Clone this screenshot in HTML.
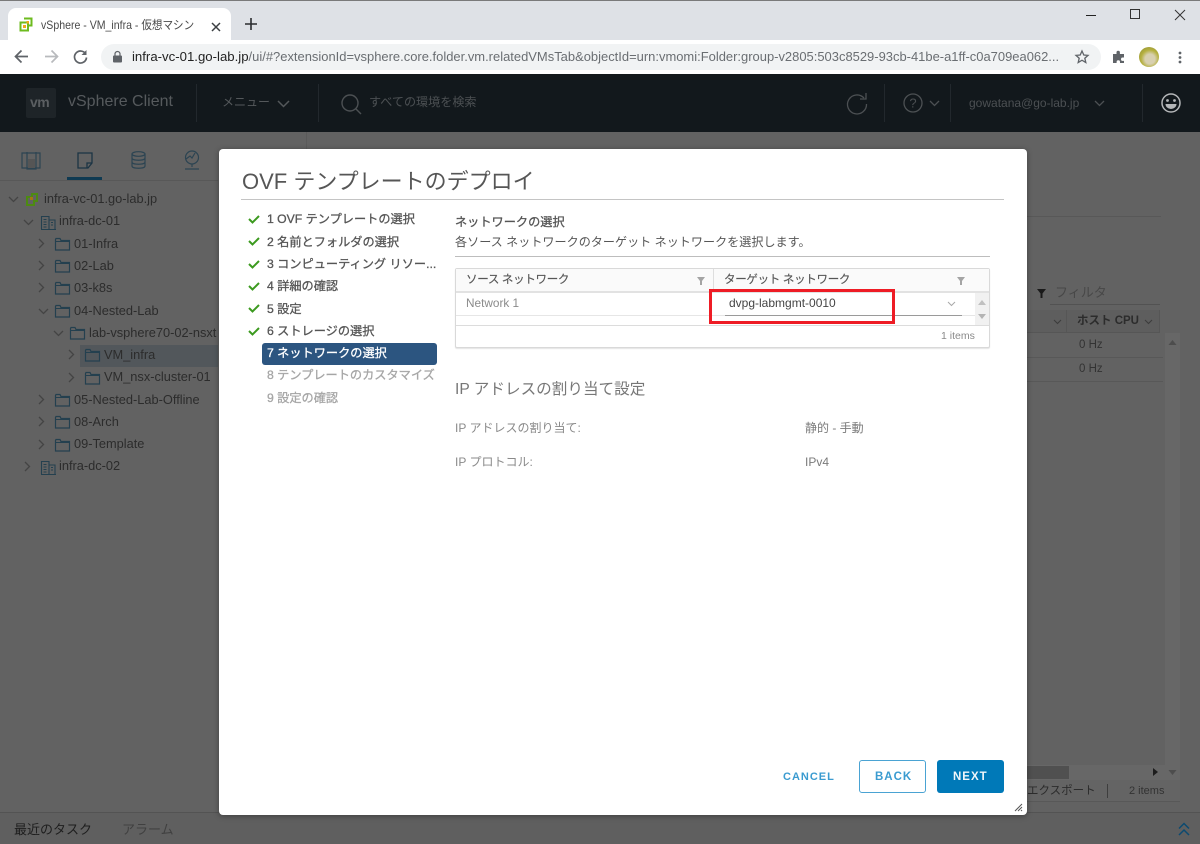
<!DOCTYPE html>
<html lang="ja"><head><meta charset="utf-8"><title>vSphere</title>
<style>
:root{color-scheme:light}
html,body{margin:0;padding:0;width:1200px;height:844px;overflow:hidden;background:#626262}
body{position:relative;font-family:"Liberation Sans","Noto Sans CJK JP",sans-serif}
.t{position:absolute;white-space:nowrap;line-height:20px;height:20px}
.b{position:absolute}
svg{position:absolute;overflow:visible}
.tree{font-size:12.8px;color:#2c2c2c}
.st{font-size:12.2px;color:#565656;left:267px;-webkit-text-stroke:.3px currentColor}
.g{color:#a6a6a6}
.btn{font-size:11.5px;font-weight:700;letter-spacing:1px;color:#3a9bd0}
.hd{font-size:11.5px;letter-spacing:-.3px;color:#565656;-webkit-text-stroke:.15px currentColor}
</style></head><body>
<div class="b" style="left:0;top:0;width:1200px;height:844px;background:#626262"></div>

<!-- chrome -->
<div class="b" style="left:0;top:0;width:1200px;height:40px;background:#dee1e6;border-top:1px solid #7a7a7a;box-sizing:border-box"></div>
<div class="b" style="left:8px;top:8px;width:223px;height:32px;background:#fff;border-radius:8px 8px 0 0"></div>
<svg style="left:19px;top:17px" width="14" height="15" viewBox="0 0 14 15"><path d="M5 1.500h7.500v7H10M1.500 5.500H9v8H1.500z" fill="none" stroke="#6dbb1f" stroke-width="2"/><rect x="4" y="8" width="3" height="3" fill="#f0a81c"/><rect x="7.500" y="4" width="2.500" height="2.500" fill="#f0a81c"/></svg>
<div class="t" style="left:41px;top:15px;font-size:12px;color:#4a4a4a;transform:scaleX(.88);transform-origin:0 50%">vSphere - VM_infra - 仮想マシン</div>
<svg style="left:211px;top:22px" width="10" height="10" viewBox="0 0 10 10"><path d="M1 1l8 8M9 1l-8 8" stroke="#3c4043" stroke-width="1.500"/></svg>
<svg style="left:245px;top:18px" width="12" height="12" viewBox="0 0 12 12"><path d="M6 0v12M0 6h12" stroke="#2a2c2f" stroke-width="1.600"/></svg>
<div class="b" style="left:1086px;top:15px;width:10px;height:1px;background:#222"></div>
<div class="b" style="left:1130px;top:9px;width:8px;height:8px;border:1.500px solid #333"></div>
<svg style="left:1175px;top:10px" width="10" height="10" viewBox="0 0 10 10"><path d="M0 0l10 10M10 0L0 10" stroke="#333" stroke-width="1"/></svg>

<div class="b" style="left:0;top:40px;width:1200px;height:34px;background:#fff"></div>
<svg style="left:14px;top:49px" width="15" height="15" viewBox="0 0 15 15"><path d="M14 7.500H2M7.500 1.500l-6 6 6 6" fill="none" stroke="#5f6368" stroke-width="1.700"/></svg>
<svg style="left:44px;top:49px" width="15" height="15" viewBox="0 0 15 15"><path d="M1 7.500h12M7.500 1.500l6 6-6 6" fill="none" stroke="#b8babd" stroke-width="1.700"/></svg>
<svg style="left:73px;top:49px" width="15" height="15" viewBox="0 0 15 15"><path d="M12.700 5A6 6 0 1 0 13.500 8.500" fill="none" stroke="#5f6368" stroke-width="1.700"/><path d="M13.500 1v5h-5z" fill="#5f6368"/></svg>
<div class="b" style="left:101px;top:44px;width:1000px;height:26px;background:#f1f3f4;border-radius:13px"></div>
<svg style="left:113px;top:51px" width="9" height="12" viewBox="0 0 9 12"><rect x="0" y="4.500" width="9" height="7" rx="1" fill="#5f6368"/><path d="M2 5V3a2.500 2.500 0 0 1 5 0v2" fill="none" stroke="#5f6368" stroke-width="1.200"/></svg>
<div class="t" style="left:132px;top:47px;font-size:12.96px;color:#6a6e72"><span style="color:#222;font-size:13.2px">infra-vc-01.go-lab.jp</span>/ui/#?extensionId=vsphere.core.folder.vm.relatedVMsTab&amp;objectId=urn:vmomi:Folder:group-v2805:503c8529-93cb-41be-a1ff-c0a709ea062...</div>
<svg style="left:1075px;top:50px" width="14" height="14" viewBox="0 0 14 14"><path d="M7 1l1.800 4 4.200.4-3.200 2.800 1 4.300L7 10.200 3.200 12.500l1-4.300L1 5.400 5.200 5z" fill="none" stroke="#5f6368" stroke-width="1.300"/></svg>
<svg style="left:1112px;top:50px" width="14" height="14" viewBox="0 0 14 14"><path d="M1 4h3.500V2.500a1.700 1.700 0 0 1 3.400 0V4H12v3.500h-1.300a1.700 1.700 0 0 0 0 3.400H12V13H8v-1a1.700 1.700 0 0 0-3.400 0v1H1z" fill="#5f6368"/></svg>
<div class="b" style="left:1139px;top:47px;width:20px;height:20px;border-radius:50%;background:radial-gradient(circle at 55% 60%,#d8d0b0 0 30%,#b5b040 55%,#8a8a30 100%)"></div>
<svg style="left:1178px;top:51px" width="4" height="13" viewBox="0 0 4 13"><circle cx="2" cy="2" r="1.400" fill="#5f6368"/><circle cx="2" cy="6.500" r="1.400" fill="#5f6368"/><circle cx="2" cy="11" r="1.400" fill="#5f6368"/></svg>

<!-- vsphere header -->
<div class="b" style="left:0;top:74px;width:1200px;height:58px;background:#12181c"></div>
<div class="b" style="left:26px;top:88px;width:30px;height:30px;background:#1e2428;border-radius:2px"></div>
<div class="t" style="left:30px;top:92px;font-size:14px;font-weight:700;color:#5b5f62;letter-spacing:-.5px">vm</div>
<div class="t" style="left:68px;top:92px;font-size:16px;color:#565a5d">vSphere Client</div>
<div class="b" style="left:196px;top:84px;width:1px;height:38px;background:#22282d"></div>
<div class="b" style="left:318px;top:84px;width:1px;height:38px;background:#22282d"></div>
<div class="t" style="left:222px;top:92px;font-size:12px;color:#54585b">メニュー</div>
<svg style="left:277px;top:100px" width="13" height="8" viewBox="0 0 13 8"><path d="M1 1l5.500 5.500L12 1" fill="none" stroke="#54585b" stroke-width="1.500"/></svg>
<svg style="left:341px;top:94px" width="22" height="22" viewBox="0 0 22 22"><circle cx="9" cy="9" r="8" fill="none" stroke="#4c5053" stroke-width="1.400"/><path d="M15 15l5 5" stroke="#4c5053" stroke-width="1.400"/></svg>
<div class="t" style="left:369px;top:92px;font-size:12.100px;color:#4c5053">すべての環境を検索</div>
<svg style="left:846px;top:92px" width="22" height="22" viewBox="0 0 22 22"><path d="M18 6A9.500 9.500 0 1 0 20.500 12" fill="none" stroke="#4c5053" stroke-width="1.300"/><path d="M20 1v6h-6" fill="none" stroke="#4c5053" stroke-width="1.300"/></svg>
<div class="b" style="left:884px;top:84px;width:1px;height:38px;background:#22282d"></div>
<svg style="left:903px;top:93px" width="20" height="20" viewBox="0 0 20 20"><circle cx="10" cy="10" r="9" fill="none" stroke="#4c5053" stroke-width="1.300"/><text x="10" y="14.500" text-anchor="middle" font-size="13" fill="#4c5053" font-family="Liberation Sans">?</text></svg>
<svg style="left:929px;top:100px" width="11" height="7" viewBox="0 0 11 7"><path d="M1 1l4.500 4.500L10 1" fill="none" stroke="#4c5053" stroke-width="1.300"/></svg>
<div class="b" style="left:950px;top:84px;width:1px;height:38px;background:#22282d"></div>
<div class="t" style="left:969px;top:93px;font-size:12px;color:#4c5053">gowatana@go-lab.jp</div>
<svg style="left:1094px;top:100px" width="11" height="7" viewBox="0 0 11 7"><path d="M1 1l4.500 4.500L10 1" fill="none" stroke="#4c5053" stroke-width="1.300"/></svg>
<div class="b" style="left:1142px;top:84px;width:1px;height:38px;background:#22282d"></div>
<svg style="left:1161px;top:93px" width="20" height="20" viewBox="0 0 20 20"><circle cx="10" cy="10" r="9" fill="none" stroke="#b4b6b8" stroke-width="1.500"/><circle cx="6.500" cy="7.500" r="1.400" fill="#b4b6b8"/><circle cx="13.500" cy="7.500" r="1.400" fill="#b4b6b8"/><path d="M4.500 11h11a5.500 5 0 0 1-11 0z" fill="#b4b6b8"/></svg>

<!-- sidebar tabs -->
<div class="b" style="left:306px;top:132px;width:1px;height:680px;background:#5a5a5a"></div>
<div class="b" style="left:0;top:180px;width:218px;height:1px;background:#585858"></div>
<div class="b" style="left:67px;top:177px;width:35px;height:3px;background:#0f3a52"></div>
<svg style="left:21px;top:151px" width="20" height="20" viewBox="0 0 20 20"><path d="M1 2h18v15H1zM6 1v17h9V1" fill="none" stroke="#2c4452" stroke-width="1.200"/><rect x="7" y="8" width="7" height="9" fill="#555"/></svg>
<svg style="left:77px;top:152px" width="16" height="17" viewBox="0 0 16 17"><path d="M1 1h14v10l-4 5H1zM15 11h-5v5" fill="none" stroke="#1b3444" stroke-width="1.300"/></svg>
<svg style="left:131px;top:151px" width="15" height="18" viewBox="0 0 15 18"><ellipse cx="7.500" cy="3" rx="6.500" ry="2.300" fill="none" stroke="#2c4452" stroke-width="1.200"/><path d="M1 3v12c0 3 13 3 13 0V3M1 7c0 3 13 3 13 0M1 11c0 3 13 3 13 0" fill="none" stroke="#2c4452" stroke-width="1.200"/></svg>
<svg style="left:184px;top:150px" width="16" height="20" viewBox="0 0 16 20"><circle cx="8" cy="7.500" r="6.500" fill="none" stroke="#2c4452" stroke-width="1.200"/><path d="M2 9l4-3 2 2 3-5M8 14v3M1 19h14" fill="none" stroke="#2c4452" stroke-width="1.200"/></svg>

<!-- tree -->
<div class="b" style="left:80px;top:345px;width:138px;height:22px;background:#52575b"></div>
<div class="t tree" style="left:44px;top:189px">infra-vc-01.go-lab.jp</div>
<div class="t tree" style="left:59px;top:211px">infra-dc-01</div>
<div class="t tree" style="left:74px;top:234px">01-Infra</div>
<div class="t tree" style="left:74px;top:256px">02-Lab</div>
<div class="t tree" style="left:74px;top:278px">03-k8s</div>
<div class="t tree" style="left:74px;top:301px">04-Nested-Lab</div>
<div class="t tree" style="left:89px;top:323px;width:129px;overflow:hidden">lab-vsphere70-02-nsxt</div>
<div class="t tree" style="left:104px;top:345px">VM_infra</div>
<div class="t tree" style="left:104px;top:367px">VM_nsx-cluster-01</div>
<div class="t tree" style="left:74px;top:390px">05-Nested-Lab-Offline</div>
<div class="t tree" style="left:74px;top:412px">08-Arch</div>
<div class="t tree" style="left:74px;top:434px">09-Template</div>
<div class="t tree" style="left:59px;top:456px">infra-dc-02</div>
<svg style="left:0;top:0" width="218" height="480" viewBox="0 0 218 480">
<defs><g id="f"><path d="M.5 2.500V13h14V3.500H6L5 1.500H1z" fill="none" stroke="#24404f" stroke-width="1.200"/><path d="M.5 4.500h14" stroke="#24404f"/></g>
<g id="d"><path d="M.5 14V1.500h7.500V14M8 5h6v9M0 14.500h15M2.500 4.500h3M2.500 7h3M2.500 9.500h3M2.500 12h3M10 7.500h2M10 10h2" fill="none" stroke="#24404f" stroke-width="1.100"/></g>
<path id="o" d="M0 0l4.500 4.500L9 0" fill="none" stroke="#444" stroke-width="1.300"/><path id="c" d="M0 0l4.500 4.500L0 9" fill="none" stroke="#444" stroke-width="1.300"/></defs>
<use href="#o" x="9" y="197"/><path d="M27 197h5v-3h5v7h-3v4h-7z" fill="none" stroke="#4d8a12" stroke-width="2"/><rect x="30" y="197" width="3" height="3" fill="#a67512"/>
<use href="#o" x="24" y="220"/><use href="#d" x="41" y="215"/>
<use href="#c" x="39" y="239"/><use href="#f" x="55" y="237"/>
<use href="#c" x="39" y="261"/><use href="#f" x="55" y="259"/>
<use href="#c" x="39" y="283"/><use href="#f" x="55" y="281"/>
<use href="#o" x="39" y="309"/><use href="#f" x="55" y="304"/>
<use href="#o" x="54" y="331"/><use href="#f" x="70" y="326"/>
<use href="#c" x="69" y="350"/><use href="#f" x="85" y="348"/>
<use href="#c" x="69" y="373"/><use href="#f" x="85" y="371"/>
<use href="#c" x="39" y="395"/><use href="#f" x="55" y="393"/>
<use href="#c" x="39" y="417"/><use href="#f" x="55" y="415"/>
<use href="#c" x="39" y="440"/><use href="#f" x="55" y="438"/>
<use href="#c" x="25" y="462"/><use href="#d" x="41" y="460"/>
</svg>

<!-- right background -->
<div class="b" style="left:1027px;top:216px;width:134px;height:1px;background:#585858"></div>
<svg style="left:1037px;top:289px" width="9" height="9" viewBox="0 0 9 9"><path d="M0 0h9L5.500 4.500V9h-2V4.500z" fill="#1a1a1a"/></svg>
<div class="t" style="left:1055px;top:283px;font-size:13px;color:#484848">フィルタ</div>
<div class="b" style="left:1050px;top:304px;width:110px;height:1px;background:#525252"></div>
<div class="b" style="left:1027px;top:310px;width:133px;height:23px;background:#5e5e5e;border-bottom:1px solid #565656;box-sizing:border-box"></div>
<div class="b" style="left:1066px;top:310px;width:1px;height:23px;background:#565656"></div>
<div class="b" style="left:1159px;top:310px;width:1px;height:23px;background:#565656"></div>
<svg style="left:1053px;top:319px" width="9" height="6" viewBox="0 0 9 6"><path d="M1 1l3.500 3.500L8 1" fill="none" stroke="#3c3c3c" stroke-width="1.100"/></svg>
<div class="t" style="left:1077px;top:311px;font-size:11.500px;font-weight:700;color:#2c2c2c">ホスト CPU</div>
<svg style="left:1144px;top:319px" width="9" height="6" viewBox="0 0 9 6"><path d="M1 1l3.500 3.500L8 1" fill="none" stroke="#3c3c3c" stroke-width="1.100"/></svg>
<div class="t" style="left:1079px;top:335px;font-size:11.500px;color:#333">0 Hz</div>
<div class="t" style="left:1079px;top:359px;font-size:11.500px;color:#333">0 Hz</div>
<div class="b" style="left:1027px;top:357px;width:136px;height:1px;background:#585858"></div>
<div class="b" style="left:1027px;top:381px;width:136px;height:1px;background:#585858"></div>
<div class="b" style="left:1165px;top:333px;width:15px;height:447px;background:#676767"></div>
<svg style="left:1168px;top:340px" width="9" height="6" viewBox="0 0 9 6"><path d="M4.500 0l4 5h-8z" fill="#4d4d4d"/></svg>
<svg style="left:1168px;top:769px" width="9" height="6" viewBox="0 0 9 6"><path d="M4.500 6l4-5h-8z" fill="#4d4d4d"/></svg>
<div class="b" style="left:1027px;top:765px;width:138px;height:15px;background:#676767"></div>
<div class="b" style="left:1027px;top:766px;width:42px;height:13px;background:#505050"></div>
<svg style="left:1153px;top:768px" width="5" height="8" viewBox="0 0 5 8"><path d="M0 0l5 4-5 4z" fill="#1d1d1d"/></svg>
<div class="b" style="left:1027px;top:780px;width:153px;height:22px;background:#646464;border-bottom:1px solid #585858;box-sizing:border-box"></div>
<div class="t" style="left:1027px;top:781px;font-size:11.500px;color:#2c2c2c">エクスポート</div>
<div class="b" style="left:1107px;top:784px;width:1px;height:14px;background:#3e3e3e"></div>
<div class="t" style="left:1129px;top:781px;font-size:11px;color:#333">2 items</div>

<!-- bottom bar -->
<div class="b" style="left:0;top:812px;width:1200px;height:32px;background:#5f5f5f;border-top:1px solid #535353;box-sizing:border-box"></div>
<div class="t" style="left:14px;top:820px;font-size:13px;color:#1e1e1e">最近のタスク</div>
<div class="t" style="left:122px;top:820px;font-size:13px;color:#404040">アラーム</div>
<svg style="left:1178px;top:822px" width="12" height="15" viewBox="0 0 12 15"><path d="M1 6.500l5-5 5 5M1 13l5-5 5 5" fill="none" stroke="#0c4a70" stroke-width="1.500"/></svg>

<!-- modal -->
<div class="b" style="left:219px;top:149px;width:808px;height:666px;background:#fff;border-radius:4px;box-shadow:0 1px 6px rgba(0,0,0,.35)"></div>
<div class="t" style="left:242px;top:168px;height:28px;line-height:28px;font-size:22px;color:#565656">OVF テンプレートのデプロイ</div>
<div class="b" style="left:241px;top:199px;width:763px;height:1px;background:#c4c4c4"></div>

<svg style="left:0;top:0" width="260" height="340" viewBox="0 0 260 340">
<defs><path id="k" d="M0 4l3.500 3.500L10 1" fill="none" stroke="#3c9a1f" stroke-width="2"/></defs>
<use href="#k" x="249" y="215"/><use href="#k" x="249" y="237"/><use href="#k" x="249" y="260"/><use href="#k" x="249" y="282"/><use href="#k" x="249" y="304"/><use href="#k" x="249" y="327"/>
</svg>
<div class="t st" style="top:209px">1 OVF テンプレートの選択</div>
<div class="t st" style="top:232px">2 名前とフォルダの選択</div>
<div class="t st" style="top:254px">3 コンピューティング リソー...</div>
<div class="t st" style="top:276px">4 詳細の確認</div>
<div class="t st" style="top:299px">5 設定</div>
<div class="t st" style="top:321px">6 ストレージの選択</div>
<div class="b" style="left:262px;top:343px;width:175px;height:22px;background:#2c5580;border-radius:3px"></div>
<div class="t st" style="top:343px;color:#fff">7 ネットワークの選択</div>
<div class="t st g" style="top:365px">8 テンプレートのカスタマイズ</div>
<div class="t st g" style="top:388px">9 設定の確認</div>

<div class="t" style="left:455px;top:212px;font-size:12.200px;color:#565656;-webkit-text-stroke:.3px #565656">ネットワークの選択</div>
<div class="t" style="left:455px;top:232px;font-size:12.100px;color:#565656">各ソース ネットワークのターゲット ネットワークを選択します。</div>
<div class="b" style="left:455px;top:256px;width:535px;height:1px;background:#bdbdbd"></div>

<!-- grid -->
<div class="b" style="left:455px;top:268px;width:535px;height:80px;border:1px solid #d9d9d9;border-radius:2px;box-sizing:border-box;background:#fff;box-shadow:0 1px 1px #e4e4e4"></div>
<div class="b" style="left:456px;top:269px;width:533px;height:22px;background:#fafafa;border-bottom:2px solid #e2e2e2"></div>
<div class="b" style="left:713px;top:269px;width:1px;height:22px;background:#dedede"></div>
<div class="t hd" style="left:466px;top:270px">ソース ネットワーク</div>
<div class="t hd" style="left:724px;top:270px">ターゲット ネットワーク</div>
<svg style="left:697px;top:277px" width="8" height="8" viewBox="0 0 8 8"><path d="M0 0h8L5 4v4H3V4z" fill="#a4a4a4"/></svg>
<svg style="left:957px;top:277px" width="8" height="8" viewBox="0 0 8 8"><path d="M0 0h8L5 4v4H3V4z" fill="#a4a4a4"/></svg>
<div class="t" style="left:466px;top:293px;font-size:11.800px;color:#8a8a8a">Network 1</div>
<div class="b" style="left:456px;top:315px;width:519px;height:1px;background:#e6e6e6"></div>
<div class="b" style="left:456px;top:325px;width:533px;height:1px;background:#dcdcdc"></div>
<div class="b" style="left:975px;top:293px;width:14px;height:32px;background:#f1f1f1"></div>
<svg style="left:978px;top:300px" width="8" height="5" viewBox="0 0 8 5"><path d="M4 0l4 5H0z" fill="#c0c0c0"/></svg>
<svg style="left:978px;top:314px" width="8" height="5" viewBox="0 0 8 5"><path d="M4 5l4-5H0z" fill="#b4b4b4"/></svg>
<div class="t" style="left:729px;top:293px;font-size:12px;color:#444">dvpg-labmgmt-0010</div>
<div class="b" style="left:725px;top:315px;width:237px;height:1px;background:#9a9a9a"></div>
<svg style="left:947px;top:301px" width="9" height="6" viewBox="0 0 9 6"><path d="M1 1l3.500 3.500L8 1" fill="none" stroke="#a8a8a8" stroke-width="1"/></svg>
<div class="b" style="left:709px;top:289px;width:186px;height:35px;border:3.500px solid #ee1c25;box-sizing:border-box"></div>
<div class="t" style="left:941px;top:326px;font-size:10.500px;color:#8a8a8a">1 items</div>

<div class="t" style="left:455px;top:380px;font-size:15.600px;color:#777">IP アドレスの割り当て設定</div>
<div class="t" style="left:455px;top:418px;font-size:12px;color:#8a8a8a">IP アドレスの割り当て:</div>
<div class="t" style="left:805px;top:418px;font-size:12px;color:#7a7a7a">静的 - 手動</div>
<div class="t" style="left:455px;top:452px;font-size:12px;color:#8a8a8a">IP プロトコル:</div>
<div class="t" style="left:805px;top:452px;font-size:12px;color:#7a7a7a">IPv4</div>

<!-- buttons -->
<div class="t btn" style="left:783px;top:767px;font-size:11px">CANCEL</div>
<div class="b" style="left:859px;top:760px;width:67px;height:33px;border:1px solid #4aa3d3;border-radius:3px;box-sizing:border-box"></div>
<div class="t btn" style="left:875px;top:767px">BACK</div>
<div class="b" style="left:937px;top:760px;width:67px;height:33px;background:#0079b8;border-radius:3px"></div>
<div class="t btn" style="left:953px;top:767px;color:#f0f6fa">NEXT</div>
<svg style="left:1014px;top:803px" width="9" height="9" viewBox="0 0 9 9"><path d="M1 8l7-7M4 8l4-4M7 8l1-1" stroke="#555" stroke-width="1"/></svg>
</body></html>
